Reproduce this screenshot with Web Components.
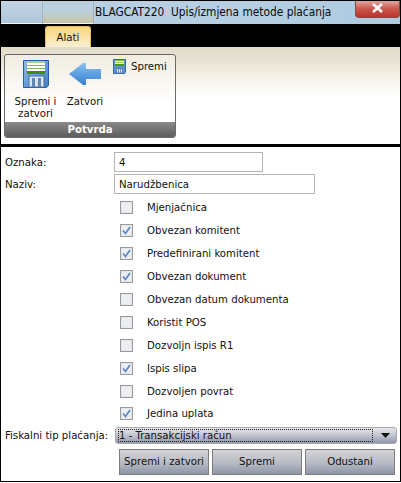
<!DOCTYPE html>
<html>
<head>
<meta charset="utf-8">
<style>
  html, body { margin: 0; height: 100%; background: #fff; overflow: hidden; }
  body { font: 11.300px/13px "DejaVu Sans Condensed", "DejaVu Sans", sans-serif; font-stretch: condensed; color: #111; }
</style>
</head>
<body>
<app-window>
  <title-bar slot="title">BLAGCAT220&nbsp; Upis/izmjena metode plaćanja</title-bar>
  <tab-strip slot="tabs">Alati</tab-strip>
  <ribbon-panel slot="ribbon">
    <ribbon-group label="Potvrda">
      <ribbon-button icon="save" style="width:55px">Spremi i zatvori</ribbon-button>
      <ribbon-button icon="back" style="width:44px">Zatvori</ribbon-button>
      <ribbon-small>Spremi</ribbon-small>
    </ribbon-group>
  </ribbon-panel>
  <payment-form slot="form">
    <text-row label="Oznaka:" value="4" width="149"></text-row>
    <text-row label="Naziv:" value="Narudžbenica" width="201"></text-row>
    <div class="checks">
      <check-row>Mjenjačnica</check-row>
      <check-row checked>Obvezan komitent</check-row>
      <check-row checked>Predefinirani komitent</check-row>
      <check-row checked>Obvezan dokument</check-row>
      <check-row>Obvezan datum dokumenta</check-row>
      <check-row>Koristit POS</check-row>
      <check-row>Dozvoljn ispis R1</check-row>
      <check-row checked>Ispis slipa</check-row>
      <check-row>Dozvoljen povrat</check-row>
      <check-row checked>Jedina uplata</check-row>
    </div>
    <combo-row label="Fiskalni tip plaćanja:">1 - Transakcijski račun</combo-row>
    <div class="actions">
      <action-button style="width:90px">Spremi i zatvori</action-button>
      <action-button style="width:90px">Spremi</action-button>
      <action-button style="width:90px">Odustani</action-button>
    </div>
  </payment-form>
</app-window>

<script>
function makeShadow(el, html) {
  el.attachShadow({ mode: 'open' }).innerHTML = html;
  return el.shadowRoot;
}

const SAVE_ICON = `
  <svg width="26" height="28" viewBox="0 0 26 28">
    <defs><linearGradient id="big" x1="0" y1="0" x2="1" y2="1">
      <stop offset="0" stop-color="#8fbdea"/><stop offset="1" stop-color="#3f7fc6"/>
    </linearGradient></defs>
    <path d="M.5.5h25v25l-2 2H.5z" fill="url(#big)" stroke="#1f5fb0"/>
    <rect x="4" y="1" width="18" height="12" fill="#fff"/>
    <rect x="4" y="1" width="18" height="2" fill="#a6d088"/>
    <rect x="4" y="5" width="18" height="1" fill="#7cb25a"/>
    <rect x="4" y="8" width="18" height="1" fill="#7cb25a"/>
    <rect x="4" y="11" width="18" height="3" fill="#3f8a14"/>
    <rect x="6" y="16" width="15" height="11" fill="#d8e4f0" stroke="#4c6f98"/>
    <rect x="9" y="18" width="3" height="9" fill="#5f86b4"/>
    <rect x="15" y="18" width="3" height="9" fill="#5f86b4"/>
  </svg>`;

// the small one has fewer stripes, they would blur at this size
const SAVE_ICON_SMALL = `
  <svg width="13" height="15" viewBox="0 0 13 15">
    <path d="M.5.500h12v13l-1 1H.5z" fill="#5f93d0" stroke="#2f66ae"/>
    <rect x="2" y="1" width="9" height="6" fill="#e8f4dc"/>
    <rect x="2" y="1" width="9" height="1" fill="#7cc04a"/>
    <rect x="2" y="3" width="9" height="1" fill="#8fd05c"/>
    <rect x="2" y="5" width="9" height="2" fill="#3f9a14"/>
    <rect x="3.500" y="9.500" width="6" height="4.500" fill="#dbe6f2" stroke="#5b7da6"/>
    <rect x="5" y="10" width="1" height="4" fill="#6b90bc"/>
    <rect x="7" y="10" width="1" height="4" fill="#6b90bc"/>
  </svg>`;

const BACK_ICON = `
  <svg width="32" height="22" viewBox="0 0 32 22">
    <defs><linearGradient id="a" x1="0" y1="0" x2="0" y2="1">
      <stop offset="0" stop-color="#8fc0ee"/><stop offset=".5" stop-color="#5c9fe2"/><stop offset="1" stop-color="#3f84d2"/>
    </linearGradient></defs>
    <path d="M0 11 14 0h3v6h15v10H17v6h-3z" fill="url(#a)"/>
  </svg>`;

customElements.define('app-window', class extends HTMLElement {
  constructor() {
    super();
    makeShadow(this, `
      <style>
        :host { display: flex; flex-direction: column; box-sizing: border-box; width: 401px; height: 482px;
                border: 1px solid #000; background: #fff; }
      </style>
      <slot name="title"></slot>
      <slot name="tabs"></slot>
      <slot name="ribbon"></slot>
      <slot name="form"></slot>`);
  }
});

customElements.define('title-bar', class extends HTMLElement {
  constructor() {
    super();
    makeShadow(this, `
      <style>
        :host { display: flex; height: 23px; background: linear-gradient(90deg, #b9cfe0, #b6cfe2 60%, #aecbe0);
                font-size: 11.800px; color: #0a0a0a; }
        .icon { width: 41px; background: linear-gradient(#c3d4e2, #aec6da); box-shadow: inset 0 -1px #eef4f7; }
        .app { width: 50px; border-left: 1px solid #9fb3c2; border-right: 1px solid #9fb3c2;
               background: linear-gradient(#bccfdc 45%, #c9c4a0); box-shadow: inset 0 -1px #eef4f7; }
        .text { flex: none; padding: 4px 0 0 1px; white-space: nowrap; line-height: 14px; }
        .close { width: 45px; height: 17px; margin-left: auto; box-sizing: border-box; text-align: center;
                 border: 1px solid #8a4a44; border-top: 0; border-radius: 0 0 4px 4px;
                 background: linear-gradient(#e0a69c, #c9554a 50%, #b8352b); }
        .close svg { display: block; margin: 2px auto 0; }
      </style>
      <div class="icon"></div><div class="app"></div>
      <div class="text"><slot></slot></div>
      <div class="close"><svg width="11" height="10" viewBox="0 0 11 10">
        <path d="M1 1l9 8M10 1l-9 8" stroke="#fff" stroke-width="2.600" fill="none"/></svg></div>`);
  }
});

customElements.define('tab-strip', class extends HTMLElement {
  constructor() {
    super();
    makeShadow(this, `
      <style>
        :host { display: flex; align-items: flex-end; height: 23px; background: #000; padding-left: 44px; }
        .tab { width: 46px; height: 21px; box-sizing: border-box; text-align: center; padding-top: 4px; color: #111;
               border: 1px solid #e6bc60; border-bottom: 0; border-radius: 3px 3px 0 0;
               background: linear-gradient(#f8d67a, #fbe8b6 70%, #f6eed6); }
      </style>
      <div class="tab"><slot></slot></div>`);
  }
});

customElements.define('ribbon-panel', class extends HTMLElement {
  constructor() {
    super();
    makeShadow(this, `
      <style>
        :host { display: block; box-sizing: border-box; height: 100px; padding: 7px 0 0 3px;
                border-bottom: 3px solid #000;
                background: linear-gradient(#e3dccb, #e6e0d0 12%, #f7f4ea 35%, #fff 50%); }
      </style>
      <slot></slot>`);
  }
});

customElements.define('ribbon-group', class extends HTMLElement {
  constructor() {
    super();
    makeShadow(this, `
      <style>
        :host { display: flex; flex-direction: column; box-sizing: border-box; width: 172px; height: 84px;
                border: 1px solid #6a6a6a; border-radius: 3px; overflow: hidden;
                background: linear-gradient(#f0ece0, #fbf9f4 40%, #fff 60%); }
        .body { flex: 1; display: flex; padding-left: 3px; }
        .label { height: 15px; background: linear-gradient(#8a8a8a, #5c5c5c); color: #fff;
                 text-align: center; font-weight: bold; line-height: 15px; }
      </style>
      <div class="body"><slot></slot></div>
      <div class="label"></div>`);
    this.shadowRoot.querySelector('.label').textContent = this.getAttribute('label');
  }
});

customElements.define('ribbon-button', class extends HTMLElement {
  constructor() {
    super();
    const isSave = this.getAttribute('icon') === 'save';
    makeShadow(this, `
      <style>
        :host { display: flex; flex-direction: column; align-items: center; padding-top: 5px; text-align: center;
                line-height: 12px; }
        .icon { height: 36px; }
        .icon.back { height: 33px; padding-top: 3px; }
        svg { display: block; }
      </style>
      <div class="icon ${isSave ? '' : 'back'}">${isSave ? SAVE_ICON : BACK_ICON}</div>
      <div class="text"><slot></slot></div>`);
  }
});

customElements.define('ribbon-small', class extends HTMLElement {
  constructor() {
    super();
    makeShadow(this, `
      <style>
        :host { display: flex; align-items: flex-start; gap: 5px; padding: 4px 0 0 6px; line-height: 14px; }
        svg { display: block; }
        .text { padding-top: 1px; }
      </style>
      ${SAVE_ICON_SMALL}<div class="text"><slot></slot></div>`);
  }
});

customElements.define('payment-form', class extends HTMLElement {
  constructor() {
    super();
    makeShadow(this, `
      <style>
        :host { display: flex; flex-direction: column; padding-top: 5px; }
        ::slotted(.checks) { display: flex; flex-direction: column; margin-top: .5px; }
        ::slotted(.actions) { display: flex; gap: 3px; margin: 5px 0 0 118px; }
      </style>
      <slot></slot>`);
  }
});

customElements.define('text-row', class extends HTMLElement {
  constructor() {
    super();
    makeShadow(this, `
      <style>
        :host { display: flex; align-items: center; height: 20px; margin-bottom: 2px; padding-left: 4px; }
        label { width: 109px; }
        .field { box-sizing: border-box; height: 20px; padding: 3px 0 0 4px; border: 1px solid #b4b4b4;
                 background: #fff; }
      </style>
      <label></label><div class="field"></div>`);
    this.shadowRoot.querySelector('label').textContent = this.getAttribute('label');
    const field = this.shadowRoot.querySelector('.field');
    field.textContent = this.getAttribute('value');
    field.style.width = this.getAttribute('width') + 'px';
  }
});

customElements.define('check-row', class extends HTMLElement {
  constructor() {
    super();
    const tick = this.hasAttribute('checked')
      ? '<path d="M3 6.500l2.500 3 4.500-6.500" fill="none" stroke="#5580c8" stroke-width="1.600"/>' : '';
    makeShadow(this, `
      <style>
        :host { display: flex; align-items: center; height: 22.900px; padding-left: 119px; }
        svg { display: block; margin-right: 14px; }
      </style>
      <svg width="13" height="13" viewBox="0 0 13 13">
        <rect x=".5" y=".5" width="12" height="12" fill="#e4e7ec" stroke="#9a9a9a"/>
        <rect x="2" y="2" width="9" height="9" fill="#eceef2"/>${tick}
      </svg>
      <slot></slot>`);
  }
});

customElements.define('combo-row', class extends HTMLElement {
  constructor() {
    super();
    makeShadow(this, `
      <style>
        :host { display: flex; align-items: center; height: 17px; margin-top: 1.500px; padding-left: 4px; }
        label { width: 110px; white-space: nowrap; }
        .box { box-sizing: border-box; width: 282px; height: 17px; display: flex; align-items: center;
               padding: 0 3px 0 2px; border: 1px solid #a8a8a8; border-radius: 3px;
               background: linear-gradient(#e8e8ea, #b8bcc8 60%, #9096a8); }
        .value { flex: 1; height: 11px; line-height: 11px; border: 1px dotted #222; white-space: nowrap; }
        svg { display: block; margin: 0 3px 0 8px; }
      </style>
      <label></label>
      <div class="box"><div class="value"><slot></slot></div>
        <svg width="9" height="5" viewBox="0 0 9 5"><path d="M0 0h9L4.500 5z" fill="#111"/></svg></div>`);
    this.shadowRoot.querySelector('label').textContent = this.getAttribute('label');
  }
});

customElements.define('action-button', class extends HTMLElement {
  constructor() {
    super();
    makeShadow(this, `
      <style>
        :host { display: flex; align-items: center; justify-content: center; box-sizing: border-box; height: 26px;
                border: 1px solid #7d7d7d; background: linear-gradient(#d4d4d6, #b6bac4 55%, #8e95a6); }
      </style>
      <slot></slot>`);
  }
});
</script>
</body>
</html>
